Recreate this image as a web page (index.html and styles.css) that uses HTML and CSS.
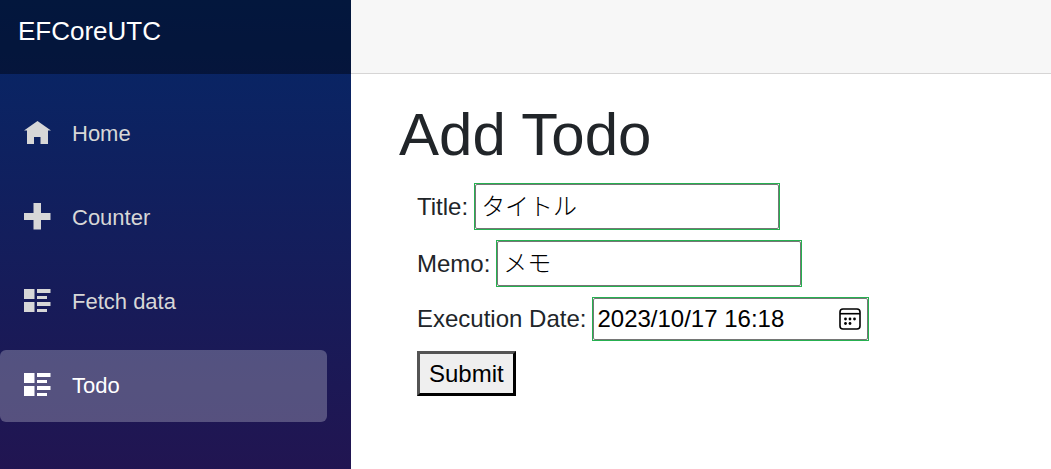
FILE: index.html
```
<!DOCTYPE html>
<html lang="en">
<head>
<meta charset="utf-8">
<title>EFCoreUTC</title>
<link rel="stylesheet" href="styles.css">
</head>
<body>
<div class="page">
  <div class="sidebar">
    <div class="brand-row"><a class="brand" href="#">EFCoreUTC</a></div>
    <nav class="nav">
      <a class="nav-link" href="#home">
        <svg class="icon" viewBox="0 0 27 27" aria-hidden="true"><path d="M13.500 2L0 11.500h3V25h7v-7h6.500v7H24V11.500h3z"/></svg>
        Home
      </a>
      <a class="nav-link" href="#counter">
        <svg class="icon" viewBox="0 0 27 27" aria-hidden="true"><path d="M9.500 0h7.500v10h9.500v7H17v9.500H9.500V17H0v-7h9.500z"/></svg>
        Counter
      </a>
      <a class="nav-link" href="#fetchdata">
        <svg class="icon" viewBox="0 0 27 27" aria-hidden="true"><path d="M0 2h10.500v10H0zM13 2h13.500v4H13zM13 9h10v3H13zM0 15h10.500v10H0zM13 15h13.500v4H13zM13 22h10v3H13z"/></svg>
        Fetch data
      </a>
      <a class="nav-link active" href="#todo" aria-current="page">
        <svg class="icon" viewBox="0 0 27 27" aria-hidden="true"><path d="M0 2h10.500v10H0zM13 2h13.500v4H13zM13 9h10v3H13zM0 15h10.500v10H0zM13 15h13.500v4H13zM13 22h10v3H13z"/></svg>
        Todo
      </a>
    </nav>
  </div>
  <main class="main">
    <div class="top-row"></div>
    <article class="content">
      <h1 class="heading">Add Todo</h1>
      <form class="form">
        <div class="field">
          <label for="title">Title:</label>
          <div class="valid"><input class="input" id="title" type="text" value="タイトル"></div>
        </div>
        <div class="field">
          <label for="memo">Memo:</label>
          <div class="valid"><input class="input" id="memo" type="text" value="メモ"></div>
        </div>
        <div class="field">
          <label for="date">Execution Date:</label>
          <div class="valid">
            <div class="date">
              <input class="date-input" id="date" type="text" value="2023/10/17 16:18">
              <button class="picker" type="button" aria-label="Show date picker">
                <svg class="picker-icon" viewBox="0 0 22 22" aria-hidden="true">
                  <rect x="1" y="1" width="20" height="20" rx="3" fill="none" stroke="#000" stroke-width="1.600"/>
                  <path d="M1 5.700h20" stroke="#000" stroke-width="1.600"/>
                  <g><circle cx="6.500" cy="11" r="1.400"/><circle cx="11" cy="11" r="1.400"/><circle cx="15.500" cy="11" r="1.400"/><circle cx="6.500" cy="15.500" r="1.400"/><circle cx="11" cy="15.500" r="1.400"/></g>
                </svg>
              </button>
            </div>
          </div>
        </div>
        <button class="submit" type="submit">Submit</button>
      </form>
    </article>
  </main>
</div>
</body>
</html>
```
FILE: styles.css
```
* {
  box-sizing: border-box;
}

body {
  margin: 0;
  color: #212529;
  background: #fff;
  font: 24px/36px "Liberation Sans", Arial, "Noto Sans CJK JP", sans-serif;
}

.page {
  display: flex;
  min-height: 100vh;
}

.sidebar {
  flex: 0 0 351px;
  background: linear-gradient(#052767 0%, #24134f 110%);
}

.brand-row {
  display: flex;
  align-items: center;
  height: 74px;
  padding: 0 18px 12px;
  background: rgba(0, 0, 0, 0.4);
}

.brand {
  color: #fff;
  font-size: 26px;
  text-decoration: none;
}

.nav {
  display: flex;
  flex-direction: column;
  gap: 12px;
  padding: 24px 24px 24px 0;
}

.nav-link {
  display: flex;
  align-items: center;
  gap: 21px;
  height: 72px;
  padding: 0 24px;
  border-radius: 6px;
  color: #d7d7d7;
  font-size: 22px;
  text-decoration: none;
}

.nav-link.active {
  background: rgba(255, 255, 255, 0.25);
  color: #fff;
}

.icon {
  width: 27px;
  height: 27px;
  margin-bottom: 4px;
  fill: currentColor;
}

.main {
  flex: 1;
  min-width: 0;
}

.top-row {
  height: 74px;
  border-bottom: 1px solid #d6d5d5;
  background: #f7f7f7;
}

.content {
  padding: 25px 48px 24px;
}

.heading {
  margin: 0 0 12px;
  font-size: 60px;
  font-weight: 400;
  line-height: 72px;
}

.form {
  display: flex;
  flex-direction: column;
  align-items: flex-start;
  padding: 0 18px;
}

.field {
  display: flex;
  align-items: center;
  gap: 6px;
  margin-bottom: 10px;
}

.valid {
  display: flex;
  border: 1px solid #26b050;
}

.input {
  width: 304px;
  height: 45px;
  padding: 0 5px 4px;
  border: 1px solid #767676;
  border-radius: 2px;
  color: #000;
  font: inherit;
  font-weight: 300;
}

.date {
  display: flex;
  align-items: center;
  width: 275px;
  height: 42px;
  padding: 0 6px 0 3px;
  border: 1px solid #767676;
  border-radius: 2px;
}

.date-input {
  flex: 1;
  min-width: 0;
  padding: 0;
  border: 0;
  outline: 0;
  color: #000;
  font: inherit;
}

.picker {
  display: flex;
  padding: 0;
  border: 0;
  background: none;
}

.picker-icon {
  width: 22px;
  height: 22px;
}

.submit {
  height: 45px;
  padding: 0 9px;
  border: 3px outset #000;
  background: #efefef;
  color: #000;
  font: inherit;
}
```
